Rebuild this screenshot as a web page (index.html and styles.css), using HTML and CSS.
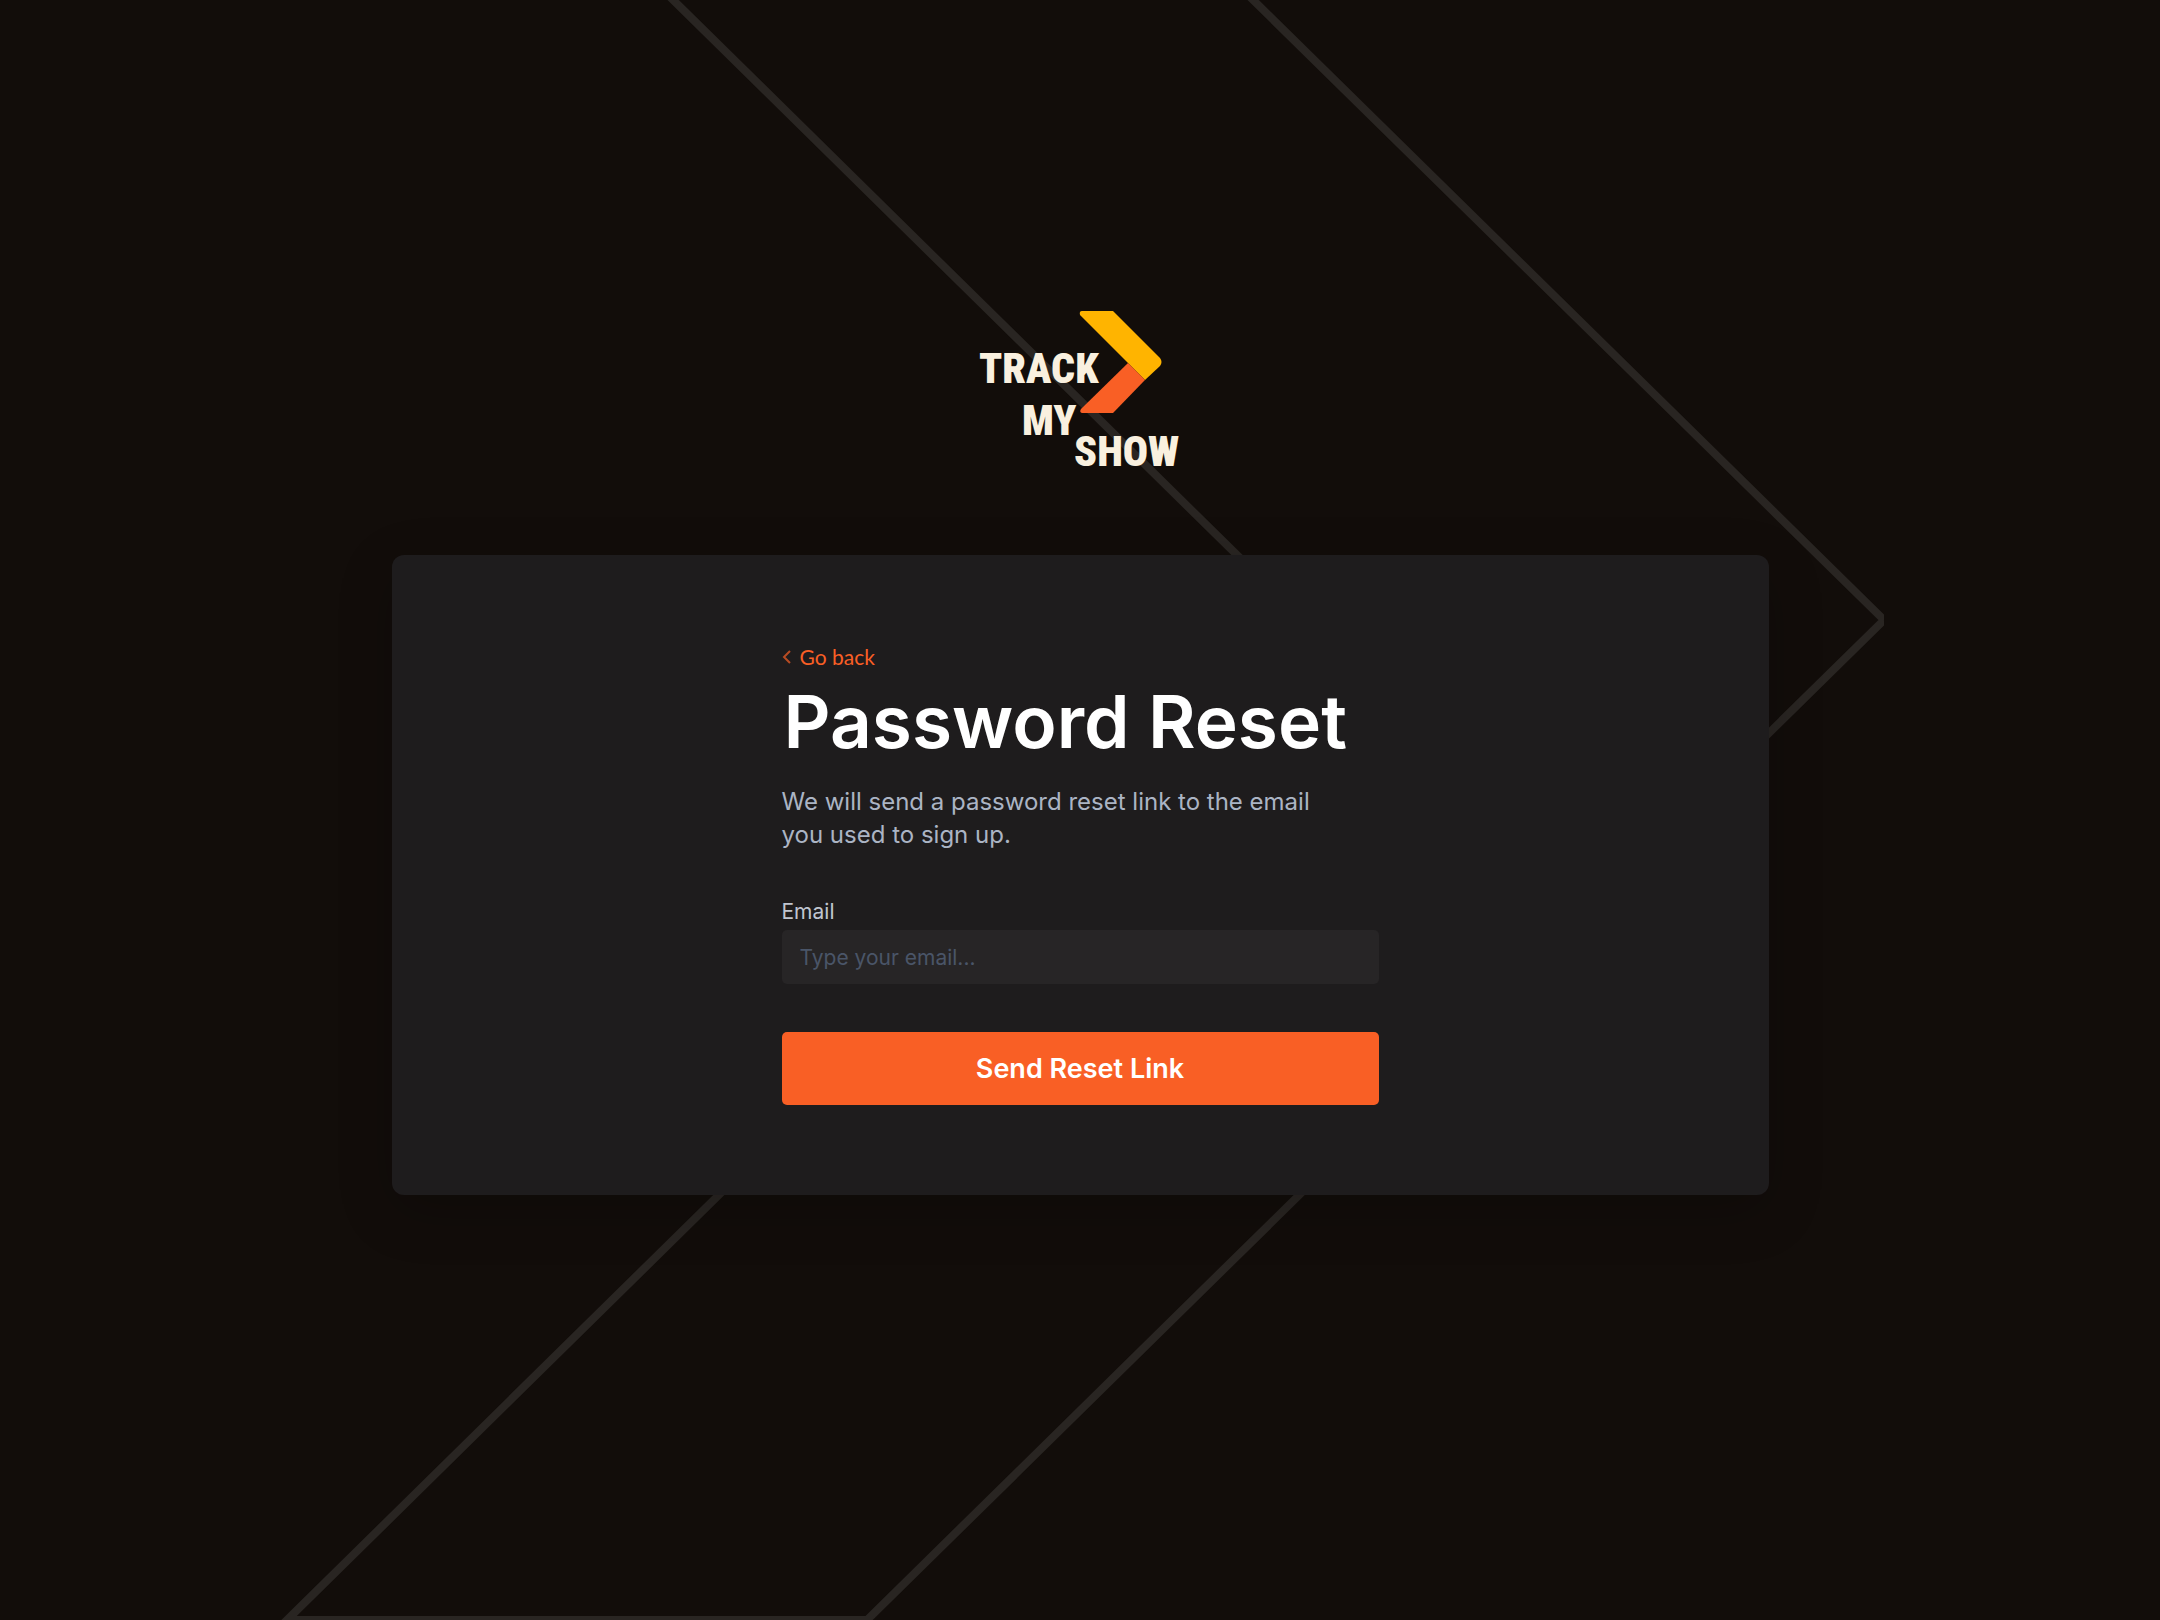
FILE: index.html
```html
<!DOCTYPE html>
<html lang="en">
<head>
<meta charset="utf-8">
<meta name="viewport" content="width=device-width, initial-scale=1">
<title>Password Reset – Track My Show</title>
<link rel="stylesheet" href="styles.css">
</head>
<body>
<svg class="backdrop" viewBox="0 0 2160 1620" preserveAspectRatio="xMidYMid slice" aria-hidden="true">
  <clipPath id="tip"><rect width="1884" height="1620"/></clipPath>
  <path clip-path="url(#tip)" d="M663-10H1243L1884 620 867 1620H287L1303 620Z" fill="none" stroke="#292522" stroke-width="8"/>
</svg>
<main class="page">
  <svg class="logo" viewBox="0 0 202 164" role="img" aria-label="Track My Show">
    <path d="M103 0H134L181 47Q184 51 181 55L166 69 101 4Q100 0 103 0Z" fill="#ffb400"/>
    <path d="M149 52 166 69 134 102H103Q100 101 102 98Z" fill="#f95f25"/>
    <g class="logo-text">
      <text x="0" y="72">TRACK</text>
      <text x="43" y="124">MY</text>
      <text x="95" y="155">SHOW</text>
    </g>
  </svg>
  <section class="card">
    <form class="form">
      <a class="back" href="#">
        <svg class="back-icon" viewBox="0 0 10 14" aria-hidden="true"><path d="M8 1 2 7 8 13" fill="none" stroke="currentColor" stroke-width="2"/></svg>
        Go back
      </a>
      <h1 class="title">Password Reset</h1>
      <p class="intro">We will send a password reset link to the email you used to sign up.</p>
      <label class="label" for="email">Email</label>
      <input class="input" id="email" type="email" placeholder="Type your email...">
      <button class="submit" type="submit">Send Reset Link</button>
    </form>
  </section>
</main>
</body>
</html>
```
FILE: styles.css
```css
* {
  box-sizing: border-box;
}

body {
  margin: 0;
  background: #120d0a;
  color: #fff;
  font-family: Inter, "Liberation Sans", sans-serif;
}

.backdrop {
  position: absolute;
  inset: 0;
  width: 100%;
  height: 100%;
}

.page {
  position: relative;
  min-height: 100vh;
  display: flex;
  flex-direction: column;
  align-items: center;
  justify-content: center;
  gap: 80px;
  padding-bottom: 114px;
}

.logo {
  width: 202px;
  height: 164px;
  overflow: visible;
}

.logo-text {
  fill: #f9f0df;
  font: 900 42px "Noto Sans ExtraCondensed", "Roboto Condensed", "Liberation Sans Narrow", sans-serif;
}

.card {
  width: 64%;
  max-width: 1377px;
  padding: 88px 24px 90px;
  display: flex;
  justify-content: center;
  border-radius: 12px;
  background: #1e1c1d;
  box-shadow: 0 16px 56px rgba(0, 0, 0, 0.2);
}

.form {
  width: 100%;
  max-width: 597px;
  display: flex;
  flex-direction: column;
}

.back {
  align-self: flex-start;
  display: flex;
  align-items: center;
  gap: 8px;
  color: #f95f25;
  font: 400 21px/28px Lato, sans-serif;
  text-decoration: none;
}

.back-icon {
  width: 10px;
  height: 14px;
  opacity: 0.7;
}

.title {
  margin: 8px 0 20px;
  padding-left: 2px;
  font-size: 73px;
  font-weight: 600;
  line-height: 86px;
}

.intro {
  max-width: 560px;
  margin: 0 0 47px;
  color: #abb4c4;
  font-size: 24px;
  line-height: 33px;
}

.label {
  margin-bottom: 4px;
  color: #c0c5d0;
  font-size: 21px;
  line-height: 28px;
}

.input {
  width: 100%;
  height: 54px;
  margin-bottom: 48px;
  padding: 0 18px;
  border: 0;
  border-radius: 5px;
  background: #272526;
  color: #fff;
  font: 400 21px Inter, sans-serif;
}

.input::placeholder {
  color: #4a5568;
}

.submit {
  height: 73px;
  border: 0;
  border-radius: 5px;
  background: #f95f25;
  color: #fff;
  font: 600 27px Inter, sans-serif;
}
```
